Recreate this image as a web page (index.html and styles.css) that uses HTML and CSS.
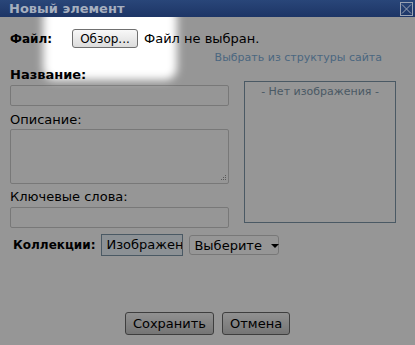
FILE: index.html
```html
<!DOCTYPE html>
<html lang="ru">
<head>
    <meta charset="UTF-8">
    <title>Новый элемент</title>
    <link rel="stylesheet" href="styles.css">
</head>
<body>
    <div class="dialog">
        <div class="titlebar">
            <span class="title">Новый элемент</span>
            <svg class="close" width="13" height="14" viewBox="0 0 13 14">
                <rect x="0.5" y="0.5" width="12" height="13" fill="none" stroke="#9aa3b3"/>
                <path d="M2 2.5 L11 11.5 M11 2.5 L2 11.5" stroke="#9aa3b3" stroke-width="1"/>
            </svg>
        </div>

        <div class="content">
            <div class="file-row">
                <span class="bold-label">Файл:</span>
                <button class="browse">Обзор...</button>
                <span class="file-name">Файл не выбран.</span>
            </div>
            <div class="link-row"><a href="#">Выбрать из структуры сайта</a></div>

            <div class="columns">
                <div class="fields">
                    <label class="bold-label big">Название:</label>
                    <input type="text" class="field">
                    <label>Описание:</label>
                    <div class="textarea">
                        <svg class="grip" width="8" height="8" viewBox="0 0 8 8">
                            <rect x="6" y="1" width="1" height="1" fill="#999"/>
                            <rect x="4" y="3" width="1" height="1" fill="#999"/>
                            <rect x="6" y="3" width="1" height="1" fill="#999"/>
                            <rect x="2" y="5" width="1" height="1" fill="#999"/>
                            <rect x="4" y="5" width="1" height="1" fill="#999"/>
                            <rect x="6" y="5" width="1" height="1" fill="#999"/>
                        </svg>
                    </div>
                    <label>Ключевые слова:</label>
                    <input type="text" class="field last">
                </div>
                <div class="preview">- Нет изображения -</div>
            </div>

            <div class="collections">
                <span class="bold-label">Коллекции:</span>
                <div class="chip">Изображени</div>
                <div class="select">Выберите <span class="arrow"></span></div>
            </div>

            <div class="actions">
                <button class="btn">Сохранить</button>
                <button class="btn">Отмена</button>
            </div>

            <!-- затемнение с подсветкой кнопки выбора файла -->
            <div class="spotlight"></div>
        </div>
    </div>
</body>
</html>
```

FILE: styles.css
```css
body {
    margin: 0;
    background-color: white;
    font-family: "DejaVu Sans", Verdana, sans-serif;
    font-size: 13px;
    color: #000;
}
.dialog {
    width: 415px;
    height: 345px;
    overflow: hidden;
}
.titlebar {
    height: 17px;
    background: linear-gradient(#294679, #1d3566);
    display: flex;
    align-items: center;
    justify-content: space-between;
    padding: 0 2px 0 9px;
}
.title {
    color: #a6afbf;
    font-weight: bold;
    font-size: 13px;
    line-height: 17px;
}
.close {
    display: block;
}
.content {
    position: relative;
    height: 328px;
    overflow: hidden;
    padding: 12px 0 0 10px;
    box-sizing: border-box;
}
.bold-label {
    font-weight: bold;
    font-size: 12px;
}
.bold-label.big {
    font-size: 13px;
}
.file-row {
    display: flex;
    align-items: center;
    height: 19px;
}
.browse {
    margin-left: 20px;
    height: 19px;
    width: 66px;
    padding: 0;
    font-family: "DejaVu Sans", sans-serif;
    font-size: 12px;
    color: #000;
    background: linear-gradient(#f8f8f8, #dcdcdc);
    border: 1px solid #707070;
    border-radius: 3px;
}
.file-name {
    margin-left: 6px;
}
.link-row {
    text-align: right;
    padding-right: 33px;
    margin-top: 3px;
    font-size: 11px;
    line-height: 13px;
}
.link-row a {
    color: #7fb0da;
    text-decoration: none;
}
.columns {
    display: flex;
    gap: 15px;
    margin-top: 3px;
}
.fields {
    width: 219px;
    display: flex;
    flex-direction: column;
}
.fields label {
    line-height: 16px;
}
.fields .field {
    margin: 2px 0 6px;
}
.fields .field.last {
    margin-bottom: 0;
}
.field {
    height: 21px;
    width: 219px;
    box-sizing: border-box;
    border: 1px solid #cdcdcd;
    border-radius: 2px;
}
.textarea {
    position: relative;
    height: 55px;
    margin: 1px 0 5px;
    border: 1px solid #cdcdcd;
    border-radius: 2px;
    box-sizing: border-box;
}
.grip {
    position: absolute;
    right: 1px;
    bottom: 1px;
}
.preview {
    margin-top: 14px;
    width: 152px;
    height: 142px;
    box-sizing: border-box;
    border: 1px solid #7e98ab;
    color: #7e98ab;
    font-size: 11px;
    text-align: center;
    padding-top: 3px;
}
.collections {
    display: flex;
    align-items: center;
    gap: 6px;
    margin-top: 6px;
    padding-left: 3px;
}
.chip {
    width: 82px;
    height: 22px;
    box-sizing: border-box;
    overflow: hidden;
    white-space: nowrap;
    padding: 2px 0 0 4px;
    background-color: #eef6fd;
    border: 1px solid #7e98ab;
}
.select {
    height: 20px;
    width: 90px;
    box-sizing: border-box;
    padding: 2px 0 0 4px;
    border: 1px solid #cdcdcd;
    border-radius: 3px;
    white-space: nowrap;
}
.arrow {
    display: inline-block;
    margin-left: 5px;
    vertical-align: 2px;
    border-left: 4px solid transparent;
    border-right: 4px solid transparent;
    border-top: 4px solid #000;
}
.actions {
    display: flex;
    justify-content: center;
    gap: 8px;
    margin-top: 56px;
    padding-right: 10px;
}
.btn {
    height: 23px;
    padding: 0 7px;
    font-family: "DejaVu Sans", sans-serif;
    font-size: 13px;
    color: #000;
    background: linear-gradient(#f6f6f6, #c8c8c8);
    border: 1px solid #6a6a6a;
    border-radius: 3px;
}
.spotlight {
    position: absolute;
    left: 43px;
    top: -12px;
    width: 134px;
    height: 75px;
    border-radius: 12px;
    box-shadow: 0 0 0 1000px rgba(0, 0, 0, 0.41);
    filter: blur(4px);
}
```
